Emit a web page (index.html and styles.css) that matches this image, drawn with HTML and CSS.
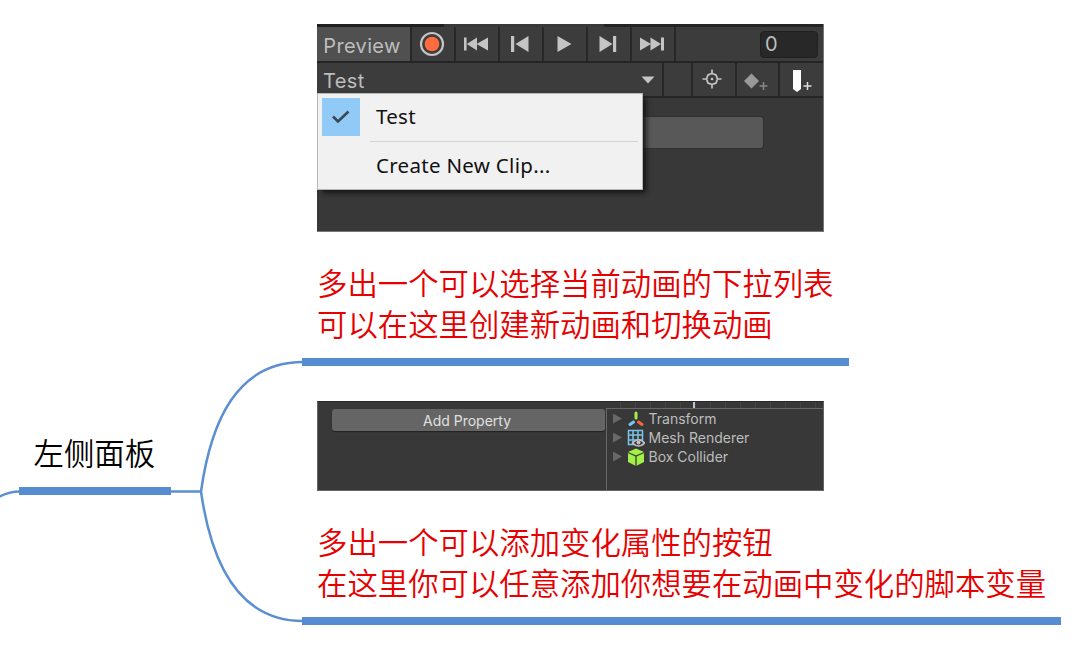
FILE: index.html
```html
<!DOCTYPE html>
<html lang="zh-CN">
<head>
<meta charset="utf-8">
<title>左侧面板</title>
<link rel="stylesheet" href="styles.css">
</head>
<body>
<main class="canvas">
  <svg class="links" width="1077" height="666" viewBox="0 0 1077 666">
    <path d="M-2 497.500Q8 491.500 20 491.500M170 491.500H201M303 362C237 362 211 421 201 491.500C211 562 238 621 303 621"/>
  </svg>

  <section class="node root">左侧面板</section>

  <section class="node branch-clips">
    <div class="panel clips">
      <div class="strip"></div>
      <div class="row playback">
        <span class="cell preview">Preview</span>
        <span class="cell"><svg width="26" height="26" viewBox="0 0 26 26"><circle cx="13" cy="13" r="11" fill="none" stroke="#c4c4c4" stroke-width="2.200"/><circle cx="13" cy="13" r="7.300" fill="#ff6b3d"/></svg></span>
        <span class="cell"><svg width="26" height="18" viewBox="0 0 26 18"><path d="M1 2.500h2.600v13H1zM14 2.500v13L3.800 9zM25 2.500v13L13.500 9z"/></svg></span>
        <span class="cell"><svg width="20" height="18" viewBox="0 0 20 18"><path d="M1 1h3.200v16H1zM18.500 1v16L5.500 9z"/></svg></span>
        <span class="cell"><svg width="16" height="18" viewBox="0 0 16 18"><path d="M1.500 1v16L15.500 9z"/></svg></span>
        <span class="cell"><svg width="20" height="18" viewBox="0 0 20 18"><path d="M1.500 1v16L14.500 9zM15 1h3.200v16H15z"/></svg></span>
        <span class="cell"><svg width="26" height="18" viewBox="0 0 26 18"><path d="M1 2.500v13L12 9zM11.500 2.500v13L22 9zM22 2.500h3v13h-3z"/></svg></span>
        <span class="cell frame"><span class="field">0</span></span>
      </div>
      <div class="row tools">
        <span class="cell clip-name">Test<svg width="14" height="8" viewBox="0 0 14 8"><path d="M.5.5h13L7 7.500z"/></svg></span>
        <span class="cell"></span>
        <span class="cell"><svg class="target" width="20" height="20" viewBox="0 0 20 20"><path class="outline" d="M10 4.500L14 6l1.500 4-1.500 4-4 1.500L6 14l-1.500-4L6 6zM10 .5v4.500M10 15v4.500M.5 10H5M15 10h4.500"/><circle cx="10" cy="10" r="1.300"/></svg></span>
        <span class="cell"><svg class="key" width="26" height="22" viewBox="0 0 26 22"><path fill="#999" d="M8.500 2.500L16 10l-7.500 7.500L1 10z"/><path fill="none" stroke="#888" stroke-width="1.500" d="M20.500 11v8M16.500 15h8"/></svg></span>
        <span class="cell"><svg class="event" width="22" height="24" viewBox="0 0 22 24"><path fill="#fff" d="M2 1h8v19l-4 3-4-3z"/><path fill="none" stroke="#ddd" stroke-width="1.500" d="M16.500 13v8M12.500 17h8"/></svg></span>
      </div>
      <div class="ghost-button"></div>
      <div class="menu">
        <div class="check"><svg width="20" height="16" viewBox="0 0 20 16"><path d="M2 7.500L7 12.500 17.500 2.500"/></svg></div>
        <div class="item">Test</div>
        <div class="divider"></div>
        <div class="item create">Create New Clip...</div>
      </div>
    </div>
    <p class="note">多出一个可以选择当前动画的下拉列表<br>可以在这里创建新动画和切换动画</p>
  </section>

  <section class="node branch-properties">
    <div class="panel properties">
      <div class="left"><div class="add">Add Property</div></div>
      <div class="right">
        <div class="ruler"><i></i></div>
        <ul class="components">
          <li><b></b><svg width="18" height="18" viewBox="0 0 18 18"><g fill="none" stroke-width="3" stroke-linecap="round"><path stroke="#a6ef4a" d="M9 3v5"/><path stroke="#75c9f3" d="M6.500 12L3 14.500"/><path stroke="#f4683a" d="M11.500 12L15 14.500"/></g></svg>Transform</li>
          <li><b></b><svg width="18" height="18" viewBox="0 0 18 18"><path fill="none" stroke="#79c5e9" stroke-width="1.500" d="M1.500 1.500h14v14h-14zM6 1.500v14M11 1.500v14M1.500 6h14M1.500 11h14"/><path fill="#383838" stroke="#c4c4c4" stroke-width="1.600" d="M5.500 14q6-6.500 12 0-6 6-12 0z"/><circle cx="11.500" cy="13.500" r="2" fill="#c4c4c4"/></svg>Mesh Renderer</li>
          <li><b></b><svg width="18" height="18" viewBox="0 0 18 18"><path fill="#a4f04b" d="M9 .5L17 4v10l-8 4-8-4V4z"/><path fill="none" stroke="#384325" stroke-width="1.300" d="M1 4.500L9 8l8-3.500M9 8v10"/></svg>Box Collider</li>
        </ul>
      </div>
    </div>
    <p class="note">多出一个可以添加变化属性的按钮<br>在这里你可以任意添加你想要在动画中变化的脚本变量</p>
  </section>
</main>
</body>
</html>
```
FILE: styles.css
```css
* { box-sizing: border-box; }
body { margin: 0; background: #fff; }
svg { display: block; flex: none; }

.canvas { position: relative; width: 1077px; height: 666px; overflow: hidden; }
.links { position: absolute; inset: 0; fill: none; stroke: #5b8fd0; stroke-width: 2.5; }

.node {
  position: absolute;
  border-bottom: 8px solid #568cd2;
  font: 350 30.38px/41px "Noto Sans CJK SC", sans-serif;
}
.root { left: 19px; top: 432px; width: 152px; height: 63px; padding-left: 14.5px; color: #000; }
.branch-clips { left: 302px; top: 24px; width: 547px; height: 342px; padding-left: 15px; }
.branch-properties { left: 302px; top: 401px; width: 759px; height: 224px; padding-left: 15px; }
.note { margin: 30px 0 0; color: #e60000; white-space: nowrap; }

.panel {
  position: relative;
  width: 507px;
  background: #383838;
  border: solid #777;
  border-width: 0 1px 1px 0;
  color: #bdbdbd;
  font-family: Inter, sans-serif;
  font-weight: 400;
  line-height: 1.2;
}
.clips { height: 208px; }
.strip { height: 3px; background: linear-gradient(90deg, #202020 127px, #383838 127px 287px, #242424 287px); }
.row { display: grid; grid-template-rows: minmax(0, 1fr); background: #3c3c3c; border-bottom: 2px solid #252525; font-size: 20px; }
.playback { height: 36px; grid-template-columns: 95px repeat(6, 44px) 1fr; }
.tools { height: 35px; grid-template-columns: 347px 29px 44px 43px 1fr; }
.cell { display: flex; align-items: center; justify-content: center; padding-right: 3px; border-right: 2px solid #272727; fill: #c4c4c4; }
.cell:last-child { border-right: 0; }
.preview { background: #505050; letter-spacing: .35px; padding: 3px 3px 0 0; }
.frame { justify-content: flex-end; padding-right: 5px; }
.field {
  width: 58px; height: 27px; padding-left: 4px;
  background: #282828; border: 1px solid #202020; border-radius: 4px;
  line-height: 25px;
}
.clip-name { justify-content: space-between; padding: 3px 7px 0 6px; letter-spacing: .4px; }
.clip-name svg { margin-top: -2px; }
.outline { fill: none; stroke: #c4c4c4; stroke-width: 1.7; }
.target { margin: -1px 2px 0 0; }
.key { margin: 4px 0 0 0; }
.event { margin: 2px 0 0 4px; }
.ghost-button { width: 310px; height: 31px; margin: 19px 0 0 136px; background: #585858; border-radius: 3px; box-shadow: 0 0 0 1px #303030; }

.menu {
  position: absolute; left: 0; top: 69px; width: 326px; height: 97px;
  display: grid; grid-template-columns: 38px 1fr; grid-template-rows: 38px 12px 37px; column-gap: 10px;
  padding: 4px;
  background: #f1f1f1; border: 1px solid #b5b8b8;
  box-shadow: 4px 4px 5px -1px #151515;
  color: #111; font: 20.5px/37px "Noto Sans", sans-serif;
}
.check { display: grid; place-items: center; width: 38px; height: 38px; background: #91c9f7; }
.check path { fill: none; stroke: #3b4650; stroke-width: 2.5; }
.item { grid-column: 2; padding-left: 6px; letter-spacing: .3px; }
.create { line-height: 35px; }
.divider { grid-column: 2; height: 1px; margin: 5px 0 0 0; background: #d2d2d2; }

.properties { display: grid; grid-template-columns: 288px 1fr; height: 90px; border: 1px solid #646464; border-top-color: #292929; font-size: 14px; }
.left { padding: 7px 1px 0 14px; }
.add { height: 22px; background: #656565; border-radius: 3px; box-shadow: 0 1px 1px #222; color: #e0e0e0; line-height: 24px; text-align: center; padding-right: 3px; }
.right { display: flex; flex-direction: column; }
.ruler {
  height: 6px; padding-left: 87px;
  background: repeating-linear-gradient(90deg, #383838 0 14px, #444 14px 15px);
}
.ruler i { display: block; width: 2px; height: 6px; background: #c4c4c4; }
.components { flex: 1; margin: 0; padding: 0 0 0 6px; border: solid #666; border-width: 1px 0 0 1px; list-style: none; line-height: 19px; }
.components li { display: flex; align-items: center; height: 19px; }
.components svg { margin: 0 3.500px 0 5px; }
.components b { width: 9px; height: 10px; background: #686868; clip-path: polygon(0 0, 100% 50%, 0 100%); }
```
